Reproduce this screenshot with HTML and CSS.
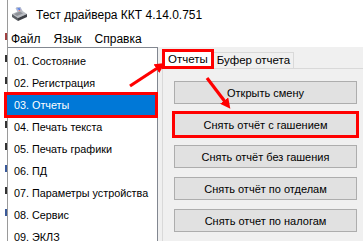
FILE: index.html
```html
<!DOCTYPE html>
<html lang="ru">
<head>
    <meta charset="UTF-8">
    <title>Тест драйвера ККТ</title>
    <link rel="stylesheet" href="styles.css">
</head>
<body>
<div class="screen">
    <!-- край соседнего окна -->
    <div class="edge">
        <i class="red"></i><i></i><i></i><i></i><i></i><i></i><i class="blue"></i><i></i><i class="blue"></i>
    </div>

    <div class="window">
        <div class="titlebar">
            <svg class="app-icon" width="17" height="15" viewBox="0 0 17 15">
                <path d="M5 1 L9 0 L11 4 L7 5 Z" fill="#fff" stroke="#7a8aa8" stroke-width="0.6"/>
                <path d="M6 2 L9 1.2 M6.6 3 L9.6 2.2" stroke="#2a5bd7" stroke-width="0.8"/>
                <path d="M7.5 3.8 L9.8 3.2" stroke="#d03030" stroke-width="0.8"/>
                <path d="M1 7 L10 3 L16 7 L7 11 Z" fill="#b9bcc2"/>
                <path d="M1 7 L7 11 L7 14 L1 10 Z" fill="#5b5e64"/>
                <path d="M7 11 L16 7 L16 10 L7 14 Z" fill="#3e4147"/>
                <path d="M3 7 L9 4.5 L12 6.5 L6 9 Z" fill="#8e9198"/>
            </svg>
            <span class="title-text">Тест драйвера ККТ 4.14.0.751</span>
        </div>

        <div class="menubar">
            <span>Файл</span>
            <span>Язык</span>
            <span>Справка</span>
        </div>

        <div class="client">
            <ul class="pages">
                <li>01. Состояние</li>
                <li>02. Регистрация</li>
                <li class="selected">03. Отчеты</li>
                <li>04. Печать текста</li>
                <li>05. Печать графики</li>
                <li>06. ПД</li>
                <li>07. Параметры устройства</li>
                <li>08. Сервис</li>
                <li>09. ЭКЛЗ</li>
            </ul>

            <div class="tabs">
                <div class="tab-heads">
                    <span class="tab active">Отчеты</span>
                    <span class="tab">Буфер отчета</span>
                </div>
                <div class="tab-page">
                    <button>Открыть смену</button>
                    <button class="marked">Снять отчёт с гашением</button>
                    <button>Снять отчёт без гашения</button>
                    <button>Снять отчёт по отделам</button>
                    <button>Снять отчет по налогам</button>
                </div>
            </div>
        </div>
    </div>

    <!-- стрелки поверх окна -->
    <svg class="arrows" width="363" height="241" viewBox="0 0 363 241">
        <defs>
            <marker id="head" viewBox="0 0 10 10" refX="3" refY="5" markerWidth="3.2" markerHeight="3.2" orient="auto">
                <path d="M0 0 L10 5 L0 10 Z" fill="#ff0000"/>
            </marker>
        </defs>
        <line x1="130" y1="86" x2="159" y2="67" stroke="#ff0000" stroke-width="3.2" marker-end="url(#head)"/>
        <line x1="207" y1="78" x2="226" y2="103" stroke="#ff0000" stroke-width="3.2" marker-end="url(#head)"/>
    </svg>
</div>
</body>
</html>
```

FILE: styles.css
```css
*{
    margin: 0;
    padding: 0;
    box-sizing: border-box;
}
body{
    font-family: "Liberation Sans", Arial, sans-serif;
    font-size: 12px;
    color: #000;
    background: #fff;
}
.screen{
    position: relative;
    display: flex;
    width: 363px;
    height: 241px;
    overflow: hidden;
}

.edge{
    width: 7px;
    flex: none;
    background: #fff;
    display: flex;
    flex-direction: column;
    align-items: flex-end;
    padding-top: 33px;
    gap: 15px;
}
.edge i{
    width: 2px;
    height: 7px;
    background: #333;
}
.edge i.red{
    background: #a04040;
}
.edge i.blue{
    background: #3a5a9a;
}

.window{
    flex: 1;
    display: flex;
    flex-direction: column;
    border-left: 1px solid #9a9a9a;
    background: #fff;
}
.titlebar{
    height: 30px;
    display: flex;
    align-items: center;
    padding-left: 3px;
    flex: none;
}
.app-icon{
    margin-right: 8px;
    margin-top: -1px;
}
.title-text{
    font-size: 12px;
}
.menubar{
    height: 17px;
    display: flex;
    align-items: center;
    padding-left: 3px;
    flex: none;
}
.menubar span{
    margin-right: 13px;
}

.client{
    flex: 1;
    display: flex;
    background: #f0f0f0;
}

.pages{
    width: 150px;
    flex: none;
    background: #fff;
    border-top: 1px solid #828790;
    border-right: 1px solid #828790;
    padding-top: 2px;
    list-style: none;
    font-size: 10.8px;
}
.pages li{
    height: 22px;
    line-height: 22px;
    padding-left: 6px;
    white-space: nowrap;
}
.pages li.selected{
    background: #0078d7;
    color: #fff;
    outline: 3px solid #ff0000;
    outline-offset: -1px;
    margin-left: -2px;
    padding-left: 8px;
    width: 150px;
}

.tabs{
    flex: 1;
    margin-left: 4px;
    padding-top: 3px;
    display: flex;
    flex-direction: column;
}
.tab-heads{
    display: flex;
    align-items: flex-end;
    height: 18px;
    padding-left: 1px;
    font-size: 11.5px;
}
.tab{
    height: 16px;
    line-height: 15px;
    padding: 0 3px;
    border: 1px solid #d9d9d9;
    border-bottom: none;
    background: #f0f0f0;
}
.tab.active{
    height: 18px;
    line-height: 16px;
    padding: 0 4px;
    background: #fff;
    outline: 3px solid #ff0000;
    outline-offset: -2px;
    position: relative;
    z-index: 1;
}
.tab-page{
    flex: 1;
    border: 1px solid #d9d9d9;
    border-right: none;
    background: #f0f0f0;
    padding: 12px 0 0 11px;
    display: flex;
    flex-direction: column;
    gap: 9px;
}
.tab-page button{
    width: 183px;
    height: 23px;
    background: #e1e1e1;
    border: 1px solid #adadad;
    font-family: inherit;
    font-size: 11px;
    color: #000;
}
.tab-page button.marked{
    outline: 3px solid #ff0000;
    outline-offset: -1px;
}

.arrows{
    position: absolute;
    left: 0;
    top: 0;
    pointer-events: none;
}
```
